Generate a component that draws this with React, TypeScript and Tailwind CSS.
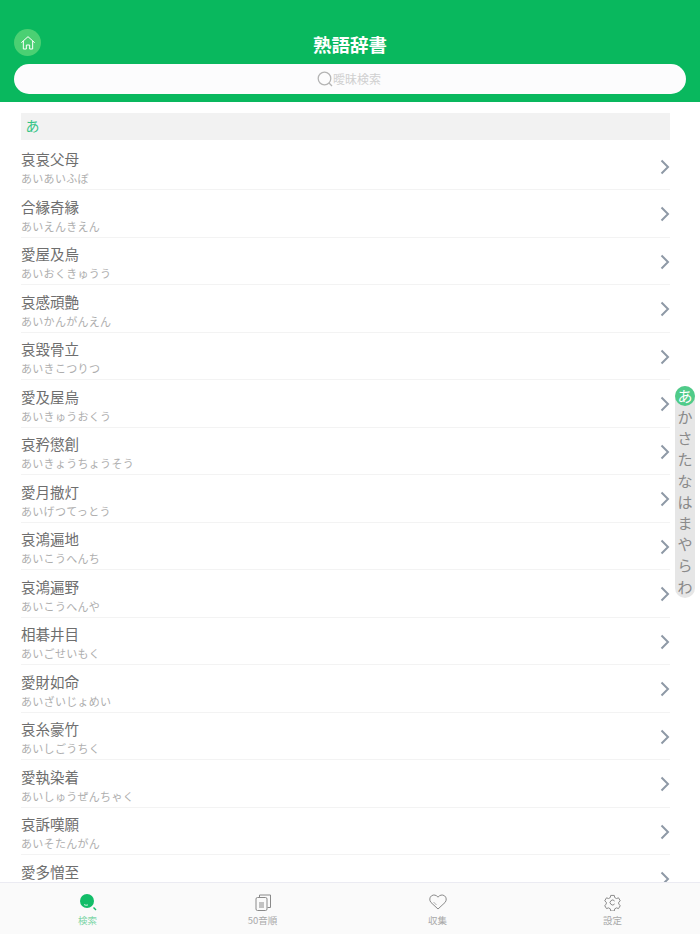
const FONT = '"Noto Sans CJK JP", "Noto Sans", sans-serif'

const words = [
  ['哀哀父母', 'あいあいふぼ'],
  ['合縁奇縁', 'あいえんきえん'],
  ['愛屋及烏', 'あいおくきゅうう'],
  ['哀感頑艶', 'あいかんがんえん'],
  ['哀毀骨立', 'あいきこつりつ'],
  ['愛及屋烏', 'あいきゅうおくう'],
  ['哀矜懲創', 'あいきょうちょうそう'],
  ['愛月撤灯', 'あいげつてっとう'],
  ['哀鴻遍地', 'あいこうへんち'],
  ['哀鴻遍野', 'あいこうへんや'],
  ['相碁井目', 'あいごせいもく'],
  ['愛財如命', 'あいざいじょめい'],
  ['哀糸豪竹', 'あいしごうちく'],
  ['愛執染着', 'あいしゅうぜんちゃく'],
  ['哀訴嘆願', 'あいそたんがん'],
  // reading of this one sits behind the tab bar
  ['愛多憎至', ''],
]

const kana = ['か', 'さ', 'た', 'な', 'は', 'ま', 'や', 'ら', 'わ']

function Chevron() {
  return (
    <svg width="10" height="16" viewBox="0 0 10 16" fill="none" className="mt-[2px] shrink-0">
      <path d="M1.500 1.500 8 8l-6.500 6.500" stroke="#8e99a6" strokeWidth="2" />
    </svg>
  )
}

function Tab({ label, active, children }: { label: string; active?: boolean; children: React.ReactNode }) {
  return (
    <div className="flex flex-1 flex-col items-center pt-[9px]">
      <div className="flex h-[20px] items-center justify-center">{children}</div>
      <span className={`mt-[1px] text-[9.5px] leading-[14px] ${active ? 'text-[#7fd6a8]' : 'text-[#a9a9a9]'}`}>{label}</span>
    </div>
  )
}

export default function App() {
  return (
    <div className="relative flex h-[934px] w-[700px] flex-col overflow-hidden bg-white" style={{ fontFamily: FONT }}>
      <header className="flex h-[102px] shrink-0 flex-col bg-[#09b85e] px-[14px]">
        <div className="relative mt-[29px] flex h-[27px] items-center justify-center">
          <div className="absolute left-0 top-0 flex h-[27px] w-[27px] items-center justify-center rounded-full bg-[#4bd073]">
            <svg width="16" height="16" viewBox="0 0 24 24" fill="none" stroke="#fff" strokeWidth="1.500" strokeLinejoin="round">
              <path d="M2 11.500 12 2.500l10 9M5 9v12h4.500v-6h5v6H19V9" />
            </svg>
          </div>
          <h1 className="mt-[3px] text-[18.500px] leading-[27px] font-bold text-white">熟語辞書</h1>
        </div>
        <div className="mt-[8px] flex h-[30px] items-center justify-center rounded-full bg-[#fcfcfd] pr-[2px]">
          <svg width="16" height="16" viewBox="0 0 16 16" fill="none" stroke="#b4b4b4" strokeWidth="1.300">
            <circle cx="7.500" cy="7.500" r="6.300" />
            <path d="m12 12 3 3" />
          </svg>
          <span className="text-[12px] leading-[16px] text-[#d0d0d0]">曖昧検索</span>
        </div>
      </header>

      <main className="min-h-0 flex-1 overflow-hidden pl-[21px] pr-[30px] pt-[11px]">
        <div className="mb-[2.500px] flex h-[27px] items-center bg-[#f2f2f2] pl-[4.500px] pb-[2px] text-[14px] text-[#35c486]">あ</div>
        {words.map(([word, reading]) => (
          <div key={word} className="flex h-[47.500px] items-center justify-between border-b border-[#f3f3f3]">
            <div className="flex flex-col self-start pt-[6.500px]">
              <span className="text-[14.500px] leading-[20px] text-[#6e6e6e]">{word}</span>
              <span className="mt-[1px] text-[11px] leading-[16px] tracking-[0.3px] text-[#aeaeae]">{reading}</span>
            </div>
            <Chevron />
          </div>
        ))}
      </main>

      <div className="absolute right-[5px] top-[386px] flex w-[20px] flex-col items-center rounded-full bg-[#e6e6e6] pb-[1px] text-[15px] leading-[21.200px] text-[#8a8a8a]">
        <span className="flex h-[20px] w-[20px] items-center justify-center rounded-full bg-[#4fcb89] text-white">あ</span>
        {kana.map((k) => (
          <span key={k}>{k}</span>
        ))}
      </div>

      <nav className="relative flex h-[52px] shrink-0 border-t border-[#ebebf2] bg-[#fafafa]">
        <Tab label="検索" active>
          <svg width="18" height="18" viewBox="0 0 18 18" fill="none">
            <circle cx="8" cy="8" r="7" fill="#12bd68" />
            <path d="M5 11.500c1.200.8 2.600.9 4 .4" stroke="#fff" strokeWidth="0.8" />
            <path d="m14.500 14.500 2.500 2.500" stroke="#12bd68" strokeWidth="1.400" />
          </svg>
        </Tab>
        <Tab label="50音順">
          <svg width="16" height="17" viewBox="0 0 16 17" fill="none" stroke="#8a8a8a" strokeWidth="1">
            <path d="M4.500 3V1h11v12.500h-3" />
            <rect x="1" y="3.500" width="11" height="13" rx="1.500" />
            <path d="M4 9h5M4 11h5M4 13h5" />
          </svg>
        </Tab>
        <Tab label="収集">
          <svg width="18" height="16" viewBox="0 0 18 16" fill="none" stroke="#8a8a8a" strokeWidth="1">
            <path d="M9 15 2 8.500C.2 6.500.4 3.300 2.500 1.800 4.700.3 7.400 1 9 3.200 10.600 1 13.300.3 15.500 1.800c2.100 1.500 2.300 4.700.5 6.700L9 15Z" />
            <path d="m4.500 8 3 3" stroke="#b0b0b0" />
          </svg>
        </Tab>
        <Tab label="設定">
          <svg width="17" height="17" viewBox="0 0 24 24" fill="none" stroke="#8a8a8a" strokeWidth="1.400" strokeLinejoin="round">
            <path d="M9.500 2h5l.6 3 2.500 1.400 2.900-1 2.500 4.300-2.300 2 .1 1.300-.1 1.300 2.300 2-2.500 4.300-2.900-1-2.500 1.400-.6 3h-5l-.6-3-2.500-1.400-2.900 1L1 16.300l2.300-2L3.200 13l.1-1.300-2.300-2 2.500-4.300 2.900 1L8.900 5l.6-3Z" />
            <path d="M15 10a3.500 3.500 0 1 0 0 4" />
          </svg>
        </Tab>
      </nav>
    </div>
  )
}
